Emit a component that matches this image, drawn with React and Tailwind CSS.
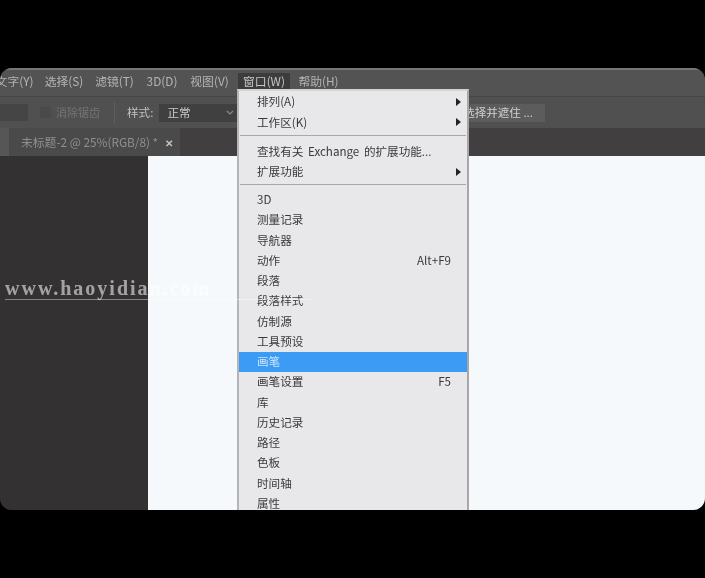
const FONT = { fontFamily: '"Noto Sans CJK SC","Liberation Sans",sans-serif' };

const topMenus = [
  ["文字(Y)", "w-[55px]", false],
  ["选择(S)", "w-[44px]", false],
  ["滤镜(T)", "w-[57px]", false],
  ["3D(D)", "w-[38px]", false],
  ["视图(V)", "w-[57px]", false],
  ["窗口(W)", "w-[52px]", true],
  ["帮助(H)", "w-[57px]", false],
];

function Item({ label, shortcut, arrow, active }) {
  return (
    <div className={`h-[20.27px] shrink-0 flex items-center pl-[18px] pr-[16px] text-[11.6px] [word-spacing:2px] justify-between ${active ? "bg-[#3b9bf5] text-[#cfe6fb]" : "text-[#3a3a3a]"}`}>
      <span>{label}</span>
      {shortcut && <span>{shortcut}</span>}
      {arrow && <span className="w-0 h-0 border-y-[4px] border-y-transparent border-l-[5px] border-l-[#222] -mr-[10px]" />}
    </div>
  );
}

function Sep({ top, bottom }) {
  return <div className={`shrink-0 mx-[1px] h-[1px] bg-[#a9a9a9] ${top} ${bottom}`} />;
}

function Menu() {
  return (
    <div className="absolute left-[237px] top-[21px] w-[232px] h-[421px] pt-[1px] bg-[#e8e8ea] border-x-2 border-t-2 border-l-[#b5b5b5] border-r-[#a8a8a8] border-t-[#d4d4d4] flex flex-col overflow-hidden">
      <Item label="排列(A)" arrow />
      <Item label="工作区(K)" arrow />
      <Sep top="mt-[2.5px]" bottom="mb-[5.5px]" />
      <Item label="查找有关 Exchange 的扩展功能..." />
      <Item label="扩展功能" arrow />
      <Sep top="mt-[2px]" bottom="mb-[4.5px]" />
      <Item label="3D" />
      <Item label="测量记录" />
      <Item label="导航器" />
      <Item label="动作" shortcut="Alt+F9" />
      <Item label="段落" />
      <Item label="段落样式" />
      <Item label="仿制源" />
      <Item label="工具预设" />
      <Item label="画笔" active />
      <Item label="画笔设置" shortcut="F5" />
      <Item label="库" />
      <Item label="历史记录" />
      <Item label="路径" />
      <Item label="色板" />
      <Item label="时间轴" />
      <Item label="属性" />
    </div>
  );
}

export default function App() {
  return (
    <div className="w-[705px] h-[578px] bg-black pt-[68px] overflow-hidden" style={FONT}>
      <div className="relative w-[705px] h-[442px] rounded-[12px] overflow-hidden bg-[#343133] flex flex-col blur-[0.4px]">
        {/* menu bar */}
        <div className="h-[28px] bg-[#535353] border-t-2 border-[#777777] flex items-start pt-[3px] text-[11.8px] text-[#b5b5b5]">
          <div className="flex items-center -ml-[13px]">
            {topMenus.map(([t, w, on]) => (
              <div key={t} className={`${w} shrink-0 h-[16px] flex items-center justify-center ${on ? "bg-[#3c3c3c] text-[#c4c4c4]" : ""}`}>{t}</div>
            ))}
          </div>
        </div>
        {/* option bar */}
        <div className="h-[32px] bg-[#505050] border-t border-[#474747] flex items-center text-[11.6px]">
          <div className="w-[28px] h-[17px] bg-[#454545]" />
          <div className="ml-[12px] w-[11px] h-[11px] bg-[#4a4a4a]" />
          <span className="ml-[5px] w-[50px] text-[11px] text-[#747474]">消除锯齿</span>
          <div className="ml-[8px] w-[1px] h-[22px] bg-[#5e5e5e]" />
          <span className="ml-[12px] text-[#c0c0c0]">样式:</span>
          <div className="ml-[6px] w-[78px] h-[18px] bg-[#404040] flex items-center pl-[8px] pr-[3px] justify-between text-[#c8c8c8]">
            正常
            <svg width="8" height="5" viewBox="0 0 8 5" fill="none" stroke="#8a8a8a" strokeWidth="1.2"><path d="M1 1l3 3 3-3" /></svg>
          </div>
          <div className="ml-auto mr-[160px] w-[77px] h-[18px] bg-[#5c5c5c] flex items-center justify-end pr-[12px] text-[11.5px] text-[#d0d0d0] whitespace-nowrap">选择并遮住 ...</div>
        </div>
        {/* tab strip */}
        <div className="h-[28px] bg-[#423f40] flex">
          <div className="w-[9px] bg-[#565656]" />
          <div className="w-[171px] bg-[#4a4a4a] flex items-center pl-[12px] text-[11.8px] text-[#8f8f8f] whitespace-nowrap">
            未标题-2 @ 25%(RGB/8) *
            <span className="ml-[7px] text-[10px] font-bold text-[#c4c4c4]">✕</span>
          </div>
        </div>
        {/* document area */}
        <div className="flex-1 flex">
          <div className="w-[148px] bg-[#343133]" />
          <div className="flex-1 bg-[#f6f9fb]" />
        </div>
        <Menu />
        <div className="absolute left-[5px] top-[210px] text-[20px] leading-[21px] font-bold tracking-[2px] text-white/55 border-b border-white/40 whitespace-nowrap pr-[100px]" style={{ fontFamily: '"Liberation Serif",serif' }}>
          www.haoyidian.com
        </div>
      </div>
    </div>
  );
}
